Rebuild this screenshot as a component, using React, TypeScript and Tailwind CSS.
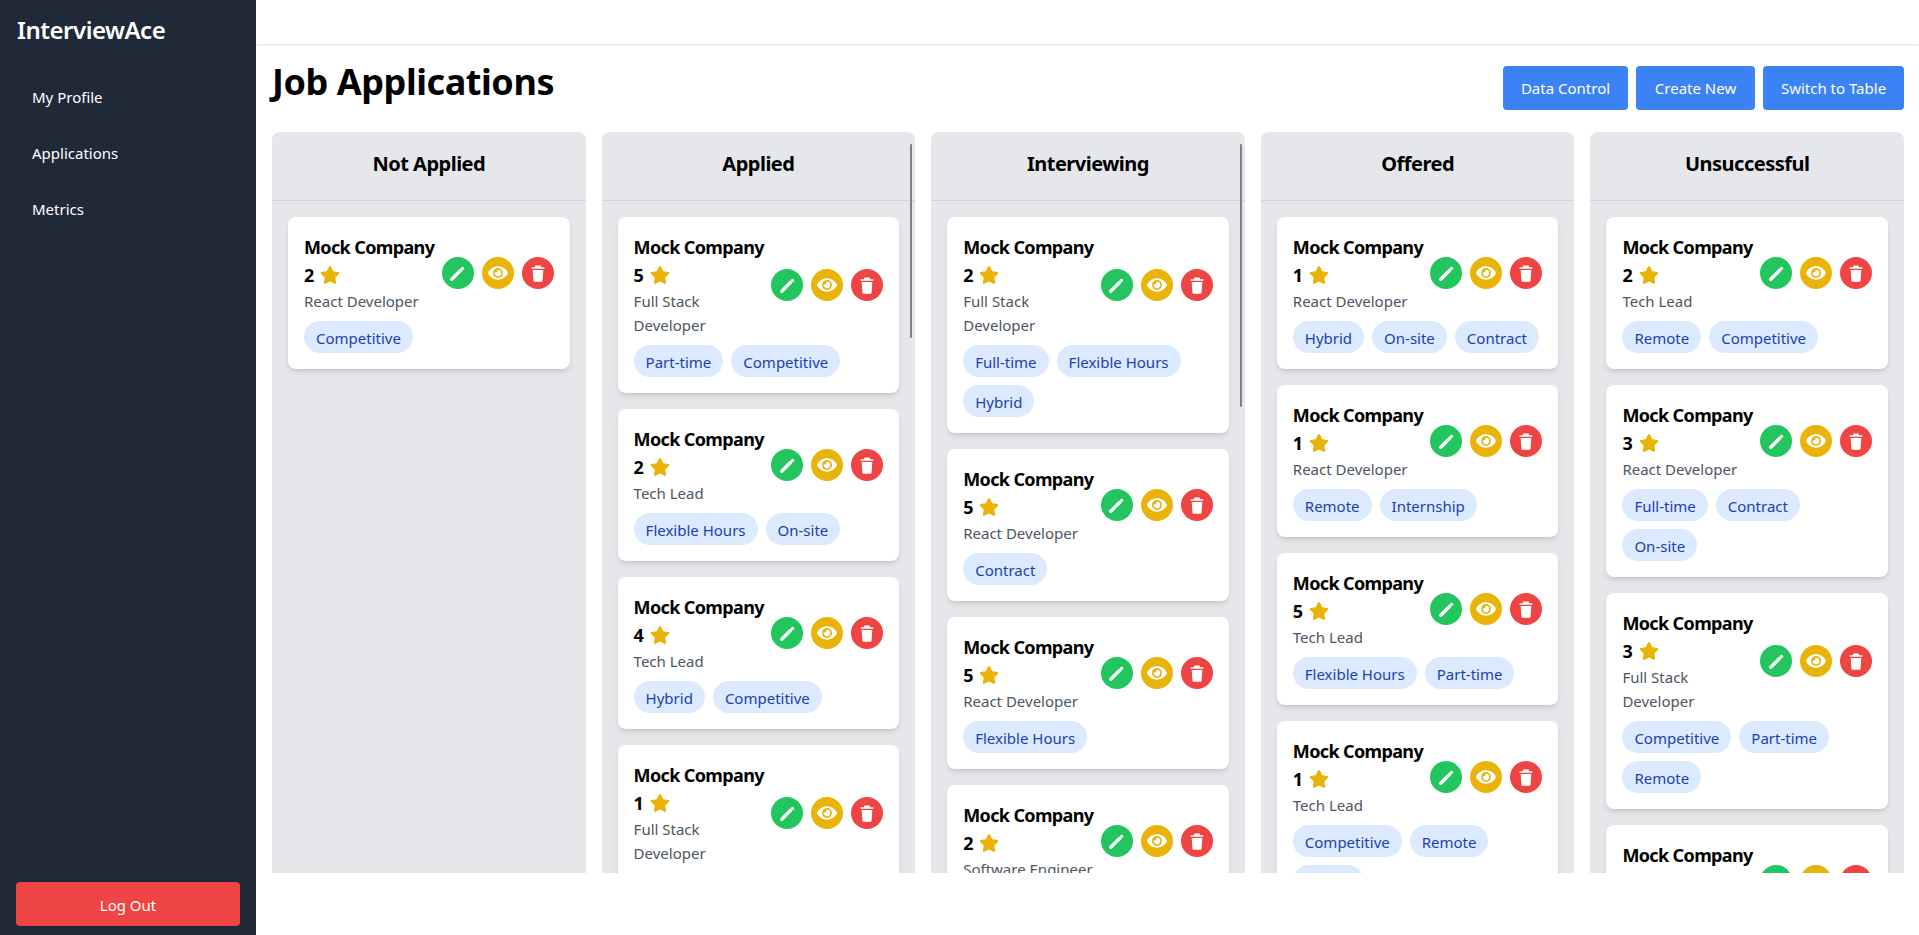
import { FaEye, FaStar } from "react-icons/fa";

type Job = { rating: number; role: string; tags: string[] };
type Column = { title: string; bar?: string; jobs: Job[] };

const FSD = "Full Stack Developer";
const RD = "React Developer";
const TL = "Tech Lead";

const columns: Column[] = [
  { title: "Not Applied", jobs: [{ rating: 2, role: RD, tags: ["Competitive"] }] },
  {
    title: "Applied",
    bar: "h-[194px]",
    jobs: [
      { rating: 5, role: FSD, tags: ["Part-time", "Competitive"] },
      { rating: 2, role: TL, tags: ["Flexible Hours", "On-site"] },
      { rating: 4, role: TL, tags: ["Hybrid", "Competitive"] },
      { rating: 1, role: FSD, tags: ["Remote"] },
    ],
  },
  {
    title: "Interviewing",
    bar: "h-[263px]",
    jobs: [
      { rating: 2, role: FSD, tags: ["Full-time", "Flexible Hours", "Hybrid"] },
      { rating: 5, role: RD, tags: ["Contract"] },
      { rating: 5, role: RD, tags: ["Flexible Hours"] },
      { rating: 2, role: "Software Engineer", tags: ["Remote"] },
    ],
  },
  {
    title: "Offered",
    jobs: [
      { rating: 1, role: RD, tags: ["Hybrid", "On-site", "Contract"] },
      { rating: 1, role: RD, tags: ["Remote", "Internship"] },
      { rating: 5, role: TL, tags: ["Flexible Hours", "Part-time"] },
      { rating: 1, role: TL, tags: ["Competitive", "Remote", "Hybrid"] },
    ],
  },
  {
    title: "Unsuccessful",
    jobs: [
      { rating: 2, role: TL, tags: ["Remote", "Competitive"] },
      { rating: 3, role: RD, tags: ["Full-time", "Contract", "On-site"] },
      { rating: 3, role: FSD, tags: ["Competitive", "Part-time", "Remote"] },
      { rating: 4, role: TL, tags: ["Hybrid"] },
    ],
  },
];

function PencilIcon() {
  return (
    <svg width="17" height="17" viewBox="0 0 16 16" fill="none">
      <path d="M2.6 13.4 L11 5" stroke="white" strokeWidth="3.2" strokeLinecap="round" />
      <path d="M11.9 1.9 a1.6 1.6 0 0 1 2.2 2.2 l-0.9 0.9 l-2.2 -2.2 Z" fill="white" />
    </svg>
  );
}

function TrashIcon() {
  return (
    <svg width="14" height="17" viewBox="0 0 13 16" fill="white">
      <path d="M4.5 0.4h4a0.8 0.8 0 0 1 0.8 0.8V2h3.2v1.6H0.5V2h3.2V1.2a0.8 0.8 0 0 1 0.8-0.8z" />
      <path d="M1.5 4.8h10l-0.7 10a1 1 0 0 1-1 0.9H3.2a1 1 0 0 1-1-0.9z" />
    </svg>
  );
}

function Card({ job }: { job: Job }) {
  return (
    <div className="shrink-0 rounded-lg bg-white p-4 shadow-md">
      <div className="flex items-center justify-between">
        <div className="min-w-0 flex-1">
          <div className="text-lg leading-7 font-bold tracking-[-0.035em] whitespace-nowrap text-black">Mock Company</div>
          <div className="flex h-7 items-center gap-1.5 text-lg font-bold text-black">
            <span>{job.rating}</span>
            <FaStar className="h-5 w-5 text-[#eab308]" />
          </div>
          <div className="text-[15px] leading-6 text-[#4b5563]">{job.role}</div>
        </div>
        <div className="flex shrink-0 gap-2">
          <button className="flex h-8 w-8 items-center justify-center rounded-full bg-[#22c55e]">
            <PencilIcon />
          </button>
          <button className="flex h-8 w-8 items-center justify-center rounded-full bg-[#eab308] text-white">
            <FaEye className="h-5 w-5" />
          </button>
          <button className="flex h-8 w-8 items-center justify-center rounded-full bg-[#ef4444]">
            <TrashIcon />
          </button>
        </div>
      </div>
      <div className="mt-2 flex flex-wrap gap-2">
        {job.tags.map((t) => (
          <span key={t} className="rounded-full bg-[#dbeafe] px-3 pt-[5px] pb-[3px] text-[15px] leading-6 text-[#1e40af]">
            {t}
          </span>
        ))}
      </div>
    </div>
  );
}

export default function App() {
  return (
    <div className="h-[935px] overflow-hidden bg-white">
      <div className="flex h-[935px] w-[1920px] font-['Noto_Sans','Open_Sans',sans-serif]">
        <aside className="flex w-64 shrink-0 flex-col bg-[#1f2937] text-white">
          <div className="pt-[14px] pl-[17px] text-2xl leading-8 font-semibold tracking-[-0.02em]">InterviewAce</div>
          <nav className="mt-[23px] flex flex-1 flex-col">
            {["My Profile", "Applications", "Metrics"].map((n) => (
              <a key={n} className="px-8 py-4 text-[15px] leading-6">
                {n}
              </a>
            ))}
          </nav>
          <div className="px-4 pb-[9px]">
            <button className="h-11 w-full rounded bg-[#ef4444] pt-0.5 text-[15px] text-white">Log Out</button>
          </div>
        </aside>
        <main className="flex min-w-0 flex-1 flex-col">
          <div className="h-[44px] shrink-0 bg-white shadow-sm" />
          <div className="flex h-[88px] shrink-0 items-start justify-between px-4 pt-[22px]">
            <h1 className="-mt-1 text-4xl leading-10 font-bold tracking-[-0.012em] text-black">Job Applications</h1>
            <div className="flex gap-2">
              <button className="h-11 w-[125px] rounded bg-[#3b82f6] pt-px text-[15px] text-white">Data Control</button>
              <button className="h-11 w-[119px] rounded bg-[#3b82f6] pt-px text-[15px] text-white">Create New</button>
              <button className="h-11 w-[141px] rounded bg-[#3b82f6] pt-px text-[15px] text-white">Switch to Table</button>
            </div>
          </div>
          <div className="grid grid-cols-5 gap-4 px-4">
            {columns.map((c) => (
              <section key={c.title} className="relative flex h-[741px] min-w-0 flex-col overflow-hidden rounded-t-lg bg-[#e5e7eb]">
                <div className="flex h-[69px] shrink-0 items-center justify-center border-b border-[#d1d5db] pb-1 text-xl font-bold tracking-[-0.025em] text-black">
                  {c.title}
                </div>
                <div className="flex flex-col gap-4 p-4">
                  {c.jobs.map((j, i) => (
                    <Card key={i} job={j} />
                  ))}
                </div>
                {c.bar && <div className={`absolute top-3 right-[3px] w-0.5 rounded-full bg-[#808080] ${c.bar}`} />}
              </section>
            ))}
          </div>
        </main>
      </div>
    </div>
  );
}
